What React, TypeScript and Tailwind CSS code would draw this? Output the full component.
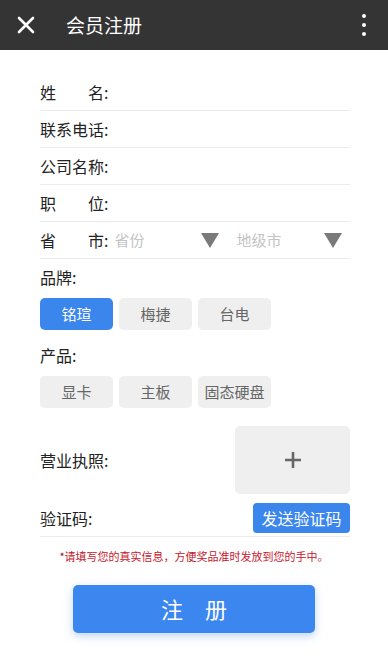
import React from "react";

const font = { fontFamily: '"Noto Sans CJK SC", "Noto Sans", sans-serif' };

function Row({ label, children }: { label: React.ReactNode; children?: React.ReactNode }) {
  return (
    <div className="flex h-[37px] items-center border-b border-[#ececec] text-[16px] text-[#222]">
      {label}
      {children}
    </div>
  );
}

function Spread({ a, b }: { a: string; b: string }) {
  return (
    <span className="flex w-[64px] justify-between">
      <span>{a}</span>
      <span>{b}</span>
    </span>
  );
}

function Tri() {
  return (
    <svg width="18" height="16" viewBox="0 0 18 16">
      <polygon points="0,1 18,1 9,16" fill="#7a7a7a" />
    </svg>
  );
}

function Chip({ text, active }: { text: string; active?: boolean }) {
  return (
    <div
      className={
        "flex h-[32px] w-[73px] items-center justify-center rounded-[5px] text-[15px] " +
        (active ? "bg-[#3a86ec] text-white" : "bg-[#efefef] text-[#666]")
      }
    >
      {text}
    </div>
  );
}

export default function App() {
  return (
    <div className="h-[671px] w-[388px] overflow-hidden bg-white" style={font}>
      <div className="flex h-[50px] items-center bg-[#343434] text-white">
        <svg className="ml-[17px]" width="18" height="18" viewBox="0 0 18 18">
          <path d="M2 2 L16 16 M16 2 L2 16" stroke="white" strokeWidth="2.6" strokeLinecap="round" />
        </svg>
        <span className="ml-[31px] text-[19px]">会员注册</span>
        <div className="ml-auto mr-[22px] flex flex-col gap-[5px]">
          <span className="h-[4px] w-[4px] rounded-full bg-white" />
          <span className="h-[4px] w-[4px] rounded-full bg-white" />
          <span className="h-[4px] w-[4px] rounded-full bg-white" />
        </div>
      </div>

      <div className="ml-[40px] mr-[38px] pt-[24px]">
        <Row label={<><Spread a="姓" b="名" /><span>:</span></>} />
        <Row label={<span>联系电话:</span>} />
        <Row label={<span>公司名称:</span>} />
        <Row label={<><Spread a="职" b="位" /><span>:</span></>} />
        <Row label={<><Spread a="省" b="市" /><span>:</span></>}>
          <span className="ml-[6px] text-[15px] text-[#c4c4c4]">省份</span>
          <span className="ml-[57px] flex"><Tri /></span>
          <span className="ml-[17px] text-[15px] text-[#c4c4c4]">地级市</span>
          <span className="ml-[43px] flex"><Tri /></span>
        </Row>

        <div className="mt-[6px] text-[16px] text-[#222]">品牌:</div>
        <div className="mt-[9px] flex gap-[6px]">
          <Chip text="铭瑄" active />
          <Chip text="梅捷" />
          <Chip text="台电" />
        </div>
        <div className="mt-[13px] text-[16px] text-[#222]">产品:</div>
        <div className="mt-[9px] flex gap-[6px]">
          <Chip text="显卡" />
          <Chip text="主板" />
          <Chip text="固态硬盘" />
        </div>

        <div className="mt-[18px] flex items-center">
          <span className="text-[16px] text-[#222]">营业执照:</span>
          <div className="ml-auto flex h-[68px] w-[115px] items-center justify-center rounded-[5px] bg-[#efefef]">
            <svg width="18" height="18" viewBox="0 0 18 18">
              <path d="M9 1 V17 M1 9 H17" stroke="#666" strokeWidth="2.6" />
            </svg>
          </div>
        </div>

        <div className="mt-[9px] flex items-center border-b border-[#ececec] pb-[3px]">
          <span className="text-[16px] text-[#222]">验证码:</span>
          <div className="ml-auto flex h-[30px] w-[97px] items-center justify-center rounded-[4px] bg-[#3a86ec] text-[16px] text-white">
            发送验证码
          </div>
        </div>
      </div>

      <div className="mt-[11px] text-center text-[11px] text-[#c4162e]">
        <span className="text-[#8a1020]">*</span>请填写您的真实信息，方便奖品准时发放到您的手中。
      </div>

      <div className="mx-auto mt-[20px] flex h-[48px] w-[242px] items-center justify-center rounded-[5px] bg-[#3b86ef] text-[22px] text-white shadow-[0_3px_8px_rgba(59,134,239,0.35)]">
        <span className="tracking-[22px] pl-[22px]">注册</span>
      </div>
    </div>
  );
}
